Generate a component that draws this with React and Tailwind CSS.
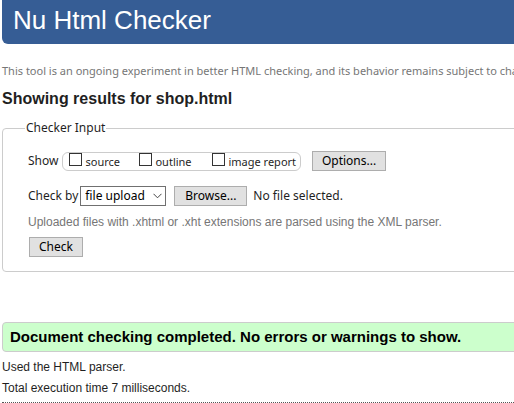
import { useRef, useState } from "react";

const sans = "font-['Liberation_Sans',Arial,sans-serif]";
const humanist = "font-['Noto_Sans',sans-serif]";
const buttonStyle =
  "h-5 border border-[#adadad] bg-[#e1e1e1] text-xs leading-[18px] text-black font-['Noto_Sans',sans-serif]";

function ShowOption({ id, label, className }) {
  return (
    <span className={`flex ${className}`}>
      <input
        id={id}
        type="checkbox"
        className="h-[13px] w-[13px] appearance-none border border-[#333] bg-white checked:bg-[#365d95]"
      />
      <label htmlFor={id} className="ml-[3px] pt-px text-[11px] leading-4">
        {label}
      </label>
    </span>
  );
}

export default function App() {
  const fileInput = useRef(null);
  const [fileName, setFileName] = useState("");

  return (
    <div className={`overflow-hidden bg-white pl-[2px] text-[#1f1f1f] ${sans}`}>
      <div className="-mr-2">
        <header className="h-11 rounded-bl-md bg-[#365d95] pl-[11px]">
          <h1 className="text-[26px] leading-10 text-white">Nu Html Checker</h1>
        </header>

        <p className={`mt-[18px] text-[11px] leading-[18px] whitespace-nowrap text-[#767676] ${humanist}`}>
          This tool is an ongoing experiment in better HTML checking, and its behavior remains subject to change
        </p>
        <h2 className="mt-[9px] text-base leading-5 font-bold">Showing results for shop.html</h2>

        <form onSubmit={(event) => event.preventDefault()}>
          <fieldset className="mt-[11px] rounded-[4px] border border-[#ccc] pb-[14px] pl-[25px]">
            <legend className={`-ml-[3px] px-px text-xs leading-4 ${humanist}`}>Checker Input</legend>

            <div className={`mt-[15px] flex h-5 items-center whitespace-nowrap ${humanist}`}>
              <span className="text-xs">Show</span>
              <div className="ml-1 flex h-[19px] rounded-md border border-[#ccc] pr-1 pl-[6px]">
                <ShowOption id="show-source" label="source" className="w-[70px]" />
                <ShowOption id="show-outline" label="outline" className="w-[73px]" />
                <ShowOption id="show-image-report" label="image report" className="" />
              </div>
              <button type="button" className={`ml-[11px] w-[74px] ${buttonStyle}`}>
                Options...
              </button>
            </div>

            <div className={`mt-[15px] flex h-5 items-center whitespace-nowrap ${humanist}`}>
              <label htmlFor="check-by" className="text-xs">
                Check by
              </label>
              <div className="ml-[2px] grid w-[86px] items-center">
                <select
                  id="check-by"
                  defaultValue="file upload"
                  className="col-start-1 row-start-1 h-5 w-full appearance-none border border-[#707070] bg-white pl-1 text-xs leading-[18px] text-black"
                >
                  <option>address</option>
                  <option>file upload</option>
                  <option>text input</option>
                </select>
                <svg
                  viewBox="0 0 9 6"
                  className="pointer-events-none col-start-1 row-start-1 mr-1 h-[6px] w-[9px] justify-self-end"
                  fill="none"
                  stroke="#444"
                  aria-hidden="true"
                >
                  <path d="M.5 .8 4.5 4.8 8.5 .8" />
                </svg>
              </div>
              <button
                type="button"
                onClick={() => fileInput.current.click()}
                className={`ml-2 w-[73px] ${buttonStyle}`}
              >
                Browse...
              </button>
              <input
                ref={fileInput}
                type="file"
                aria-label="File"
                className="hidden"
                onChange={(event) => setFileName(event.target.files[0]?.name ?? "")}
              />
              <output className="ml-[6px] text-xs">{fileName || "No file selected."}</output>
            </div>

            <p className="mt-[7px] text-xs leading-[18px] text-[#767676]">
              Uploaded files with .xhtml or .xht extensions are parsed using the XML parser.
            </p>
            <button type="submit" className={`mt-[6px] ml-px block w-[54px] ${buttonStyle}`}>
              Check
            </button>
          </fieldset>
        </form>

        <p className="mt-[50px] rounded-[4px] border border-[#ccc] bg-[#ccffcc] pl-[7px] text-[15px] leading-7 font-bold text-black">
          Document checking completed. No errors or warnings to show.
        </p>
        <p className="mt-[5px] text-xs leading-[21px]">Used the HTML parser.</p>
        <p className="text-xs leading-[21px]">Total execution time 7 milliseconds.</p>
        <hr className="mt-[3px] border-t border-dotted border-[#555]" />
      </div>
    </div>
  );
}
